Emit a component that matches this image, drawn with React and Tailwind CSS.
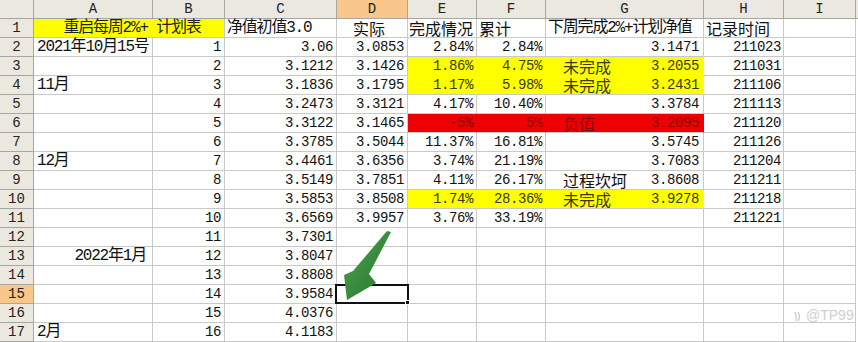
import React from 'react';

const CJK = /([\u3000-\u9fff\uff00-\uffef]+)/;

function Txt({ s }) {
  const parts = String(s).split(CJK).filter(Boolean);
  if (parts.length > 1) {
    return (
      <span className="inline-block h-[17px] font-['Liberation_Mono','Noto_Sans_CJK_SC',monospace] text-[16px] leading-[17px] tracking-[-1.2px]">
        {s}
      </span>
    );
  }
  return CJK.test(s) ? (
    <span className="inline-block h-[17px] font-['Noto_Sans_CJK_SC',sans-serif] text-[16px] leading-[17px]">{s}</span>
  ) : (
    <span className="inline-block h-[17px] font-['Liberation_Mono',monospace] text-[14px] leading-[17px] tracking-[-0.4px]">{s}</span>
  );
}

const FILLS = {
  none: 'bg-white border-[#c9c9c9] text-[#111]',
  yellow: 'bg-[#ffff00] border-r-[#ffff00] border-b-[#c9c9c9] text-[#3a3a10]',
  yellowTop: 'bg-[#ffff00] border-[#ffff00] text-[#3a3a10]',
  red: 'bg-[#ee0000] border-r-[#ee0000] border-b-[#c9c9c9] text-[#8a0000]',
};

function Cell({ children, fill = 'none', className = '' }) {
  return (
    <div
      className={`h-[19px] border-r border-b flex items-center whitespace-nowrap leading-[17px] ${FILLS[fill]} ${className}`}
    >
      {children}
    </div>
  );
}

const rows = [
  { a: '2021年10月15号', b: 1, c: '3.06', d: '3.0853', e: '2.84%', f: '2.84%', g: '3.1471', h: '211023' },
  { b: 2, c: '3.1212', d: '3.1426', e: '1.86%', f: '4.75%', gt: '未完成', g: '3.2055', h: '211031', fill: 'yellowTop' },
  { a: '11月', b: 3, c: '3.1836', d: '3.1795', e: '1.17%', f: '5.98%', gt: '未完成', g: '3.2431', h: '211106', fill: 'yellow' },
  { b: 4, c: '3.2473', d: '3.3121', e: '4.17%', f: '10.40%', g: '3.3784', h: '211113' },
  { b: 5, c: '3.3122', d: '3.1465', e: '-5%', f: '5%', gt: '负值', g: '3.2095', h: '211120', fill: 'red' },
  { b: 6, c: '3.3785', d: '3.5044', e: '11.37%', f: '16.81%', g: '3.5745', h: '211126' },
  { a: '12月', b: 7, c: '3.4461', d: '3.6356', e: '3.74%', f: '21.19%', g: '3.7083', h: '211204' },
  { b: 8, c: '3.5149', d: '3.7851', e: '4.11%', f: '26.17%', gt: '过程坎坷', g: '3.8608', h: '211211' },
  { b: 9, c: '3.5853', d: '3.8508', e: '1.74%', f: '28.36%', gt: '未完成', g: '3.9278', h: '211218', fill: 'yellow' },
  { b: 10, c: '3.6569', d: '3.9957', e: '3.76%', f: '33.19%', h: '211221' },
  { b: 11, c: '3.7301' },
  { a: '2022年1月', aRight: true, b: 12, c: '3.8047' },
  { b: 13, c: '3.8808' },
  { b: 14, c: '3.9584' },
  { b: 15, c: '4.0376' },
  { a: '2月', b: 16, c: '4.1183' },
];

const cols = ['A', 'B', 'C', 'D', 'E', 'F', 'G', 'H', 'I'];

function Head({ children, active }) {
  return (
    <div
      className={`h-[19px] border-r border-b border-[#a6a6a6] flex items-center justify-center font-['Liberation_Mono',monospace] text-[14px] leading-[17px] text-[#222] ${
        active ? 'bg-[#f9c68b]' : 'bg-[#ebe9df]'
      }`}
    >
      {children}
    </div>
  );
}

export default function App() {
  return (
    <div className="relative w-[858px] h-[342px] overflow-hidden bg-white">
      <div className="grid grid-cols-[34px_119px_72px_112px_71px_69px_69px_158px_80px_72px_2px]">
        {/* column headers */}
        <Head />
        {cols.map((c) => (
          <Head key={c} active={c === 'D'}>
            {c}
          </Head>
        ))}
        <div className="h-[19px] bg-[#ebe9df] border-b border-[#a6a6a6]" />

        {/* row 1 */}
        <Head>1</Head>
        <div className="col-span-2 h-[19px] bg-[#ffff00] border-r border-b border-r-[#c9c9c9] border-b-[#c9c9c9] flex items-center justify-center whitespace-nowrap leading-[17px] text-[#222] pl-[6px]">
          <Txt s="重启每周2%+ 计划表" />
        </div>
        <Cell className="bg-[#107010] border-[#107010] text-[#0c4d0c] pl-[2px]">
          <Txt s="净值初值3.0" />
        </Cell>
        <Cell className="pl-[16px]">
          <Txt s="实际" />
        </Cell>
        <Cell className="pl-[1px]">
          <Txt s="完成情况" />
        </Cell>
        <Cell className="pl-[2px]">
          <Txt s="累计" />
        </Cell>
        <Cell className="pl-[2px]">
          <Txt s="下周完成2%+计划净值" />
        </Cell>
        <Cell className="pl-[2px]">
          <Txt s="记录时间" />
        </Cell>
        <Cell />
        <div className="h-[19px]" />

        {rows.map((r, i) => {
          const n = i + 2;
          const fill = r.fill || 'none';
          return (
            <React.Fragment key={n}>
              <Head active={n === 15}>{n}</Head>
              <Cell className={r.aRight ? 'justify-end pr-[6px]' : 'pl-[3px]'}>{r.a && <Txt s={r.a} />}</Cell>
              <Cell className="justify-end pr-[3px]">
                <Txt s={r.b} />
              </Cell>
              <Cell className="justify-end pr-[3px]">{r.c && <Txt s={r.c} />}</Cell>
              <Cell className="justify-end pr-[3px]">{r.d && <Txt s={r.d} />}</Cell>
              <Cell fill={fill} className="justify-end pr-[3px]">
                {r.e && <Txt s={r.e} />}
              </Cell>
              <Cell fill={fill} className="justify-end pr-[3px]">
                {r.f && <Txt s={r.f} />}
              </Cell>
              <Cell fill={fill} className="justify-between pl-[17px] pr-[4px]">
                {r.gt ? <Txt s={r.gt} /> : <span />}
                {r.g ? <Txt s={r.g} /> : <span />}
              </Cell>
              <Cell className="justify-end pr-[2px]">{r.h && <Txt s={r.h} />}</Cell>
              <Cell />
              <div className="h-[19px]" />
            </React.Fragment>
          );
        })}
      </div>

      {/* active cell D15 */}
      <div className="absolute left-[335px] top-[284px] w-[74px] h-[20px] border-2 border-[#111]" />
      <div className="absolute left-[405px] top-[300px] w-[5px] h-[5px] bg-[#111] border border-white" />

      {/* green arrow annotation */}
      <svg className="absolute left-0 top-0 pointer-events-none" width="858" height="342">
        <defs>
          <linearGradient id="arr" x1="0" y1="0" x2="1" y2="1">
            <stop offset="0" stopColor="#4fa24f" />
            <stop offset="1" stopColor="#23772b" />
          </linearGradient>
        </defs>
        <polygon
          points="391,232 369,274 376,283 347,300 344,275 353,271 387,231"
          fill="url(#arr)"
        />
      </svg>

      {/* watermark */}
      <div className="absolute left-[792px] top-[307px] flex items-center gap-[4px] text-[#cfcfcf] font-['Liberation_Sans',sans-serif] text-[14px] leading-[17px]">
        <svg width="10" height="14" viewBox="0 0 10 14" fill="none" stroke="#c8c8c8" strokeWidth="1.2">
          <path d="M2 4 Q4 3 4 6 L4 12 M6 3 Q9 7 6 12" />
        </svg>
        <span>@TP99</span>
      </div>
    </div>
  );
}
